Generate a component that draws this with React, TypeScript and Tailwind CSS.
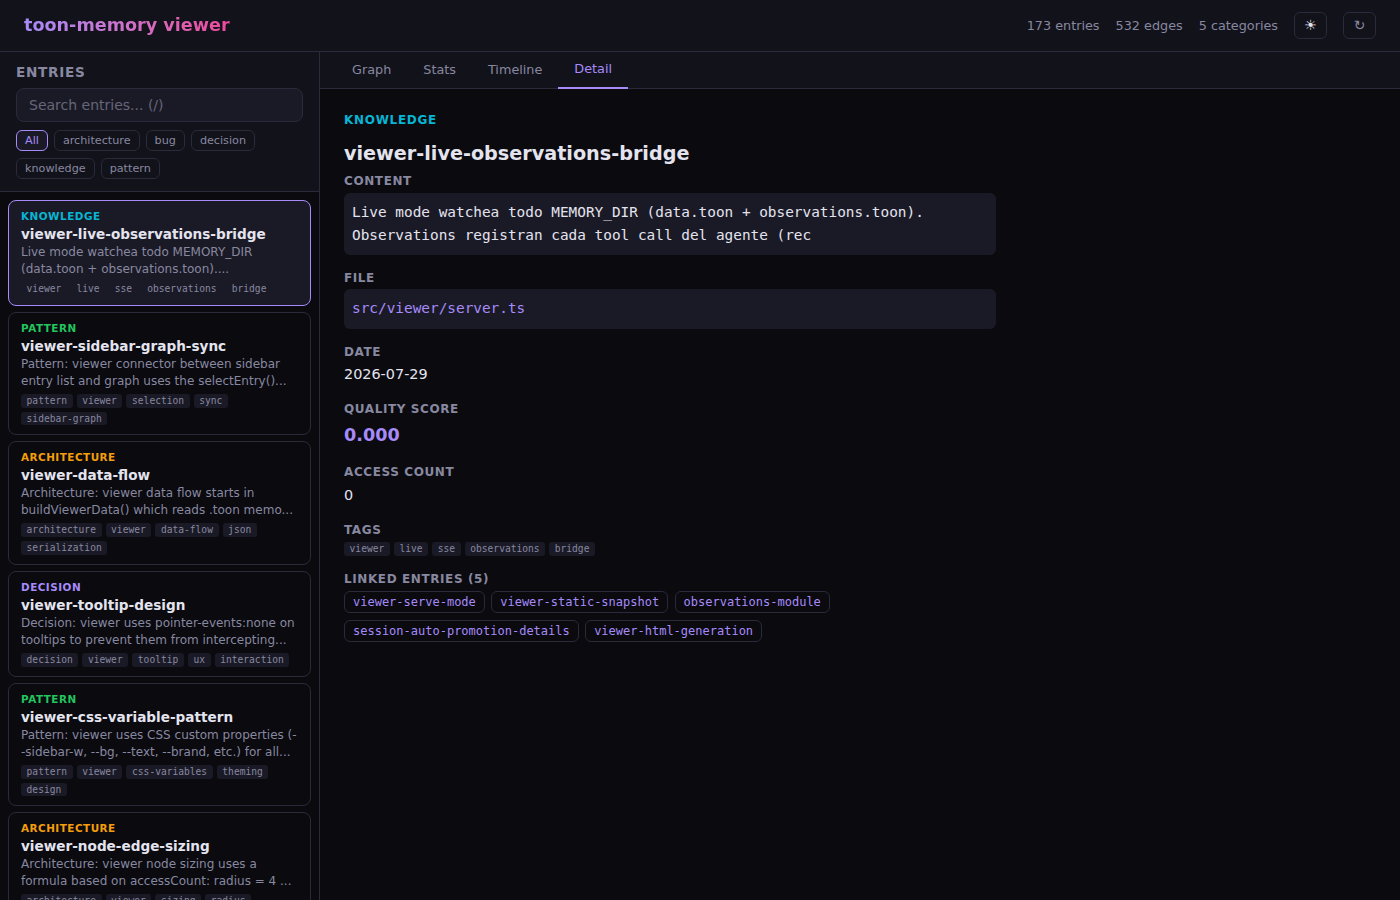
import { Fragment } from 'react';

const sans = "font-['DejaVu_Sans',sans-serif]";

const categoryColors: Record<string, string> = {
  knowledge: 'text-[#06b6d4]',
  pattern: 'text-[#22c55e]',
  architecture: 'text-[#f59e0b]',
  decision: 'text-[#a78bfa]',
};

const filters = ['All', 'architecture', 'bug', 'decision', 'knowledge', 'pattern'];

const entries = [
  {
    category: 'knowledge',
    title: 'viewer-live-observations-bridge',
    desc: ['Live mode watchea todo MEMORY_DIR', '(data.toon + observations.toon)....'],
    tags: ['viewer', 'live', 'sse', 'observations', 'bridge'],
    active: true,
  },
  {
    category: 'pattern',
    title: 'viewer-sidebar-graph-sync',
    desc: ['Pattern: viewer connector between sidebar', 'entry list and graph uses the selectEntry()...'],
    tags: ['pattern', 'viewer', 'selection', 'sync', 'sidebar-graph'],
  },
  {
    category: 'architecture',
    title: 'viewer-data-flow',
    desc: ['Architecture: viewer data flow starts in', 'buildViewerData() which reads .toon memo...'],
    tags: ['architecture', 'viewer', 'data-flow', 'json', 'serialization'],
  },
  {
    category: 'decision',
    title: 'viewer-tooltip-design',
    desc: ['Decision: viewer uses pointer-events:none on', 'tooltips to prevent them from intercepting...'],
    tags: ['decision', 'viewer', 'tooltip', 'ux', 'interaction'],
  },
  {
    category: 'pattern',
    title: 'viewer-css-variable-pattern',
    desc: ['Pattern: viewer uses CSS custom properties (-', '-sidebar-w, --bg, --text, --brand, etc.) for all...'],
    tags: ['pattern', 'viewer', 'css-variables', 'theming', 'design'],
  },
  {
    category: 'architecture',
    title: 'viewer-node-edge-sizing',
    desc: ['Architecture: viewer node sizing uses a', 'formula based on accessCount: radius = 4 ...'],
    tags: ['architecture', 'viewer', 'sizing', 'radius'],
  },
];

const links = [
  'viewer-serve-mode',
  'viewer-static-snapshot',
  'observations-module',
  'session-auto-promotion-details',
  'viewer-html-generation',
];

function Tag({ label }: { label: string }) {
  return (
    <span className="rounded-[3px] bg-[#1a1a26] px-[5.6px] font-['DejaVu_Sans_Mono',monospace] text-[9.6px] leading-[13.8px] text-[#8888a0]">
      {label}
    </span>
  );
}

function Label({ children }: { children: string }) {
  return <div className="text-[12px] leading-[15px] font-bold tracking-[0.6px] text-[#8888a0]">{children}</div>;
}

function EntryCard({ entry }: { entry: (typeof entries)[number] }) {
  return (
    <div
      className={
        entry.active
          ? 'mb-[6px] shrink-0 rounded-[8px] border border-[#a78bfa] bg-[#1a1a26] px-[12px] pt-[9px] pb-[9px]'
          : 'mb-[6px] shrink-0 rounded-[8px] border border-[#2a2a3a] px-[12px] pt-[9px] pb-[9px]'
      }
    >
      <div className={`text-[10.4px] leading-[13px] font-bold tracking-[0.5px] uppercase ${categoryColors[entry.category]}`}>
        {entry.category}
      </div>
      <div className="mt-[3px] text-[13.6px] leading-[17px] font-semibold text-[#e4e4ef]">{entry.title}</div>
      <div className="mt-[1px] text-[12px] leading-[17px] whitespace-nowrap text-[#8888a0]">
        {entry.desc.map((line) => (
          <Fragment key={line}>
            {line}
            <br />
          </Fragment>
        ))}
      </div>
      <div className="mt-[4px] flex flex-wrap gap-[4px]">
        {entry.tags.map((t) => (
          <Tag key={t} label={t} />
        ))}
      </div>
    </div>
  );
}

export default function App() {
  return (
    <div className={`flex h-[900px] w-[1400px] flex-col overflow-hidden bg-[#0a0a0f] text-[#e4e4ef] ${sans}`}>
      <header className="flex h-[52px] shrink-0 items-center justify-between border-b border-[#2a2a3a] bg-[#12121a] px-[24px]">
        <h1 className="bg-gradient-to-r from-[#a78bfa] to-[#ec4899] bg-clip-text text-[17.6px] font-bold text-transparent">
          toon-memory viewer
        </h1>
        <div className="flex items-center gap-[16px] text-[12.8px] text-[#8888a0]">
          <span>173 entries</span>
          <span>532 edges</span>
          <span>5 categories</span>
          <button className="h-[27px] w-[33px] rounded-[6px] border border-[#2a2a3a] text-[14px] text-[#e4e4ef]">☀</button>
          <button className="h-[27px] w-[33px] rounded-[6px] border border-[#2a2a3a] text-[14px]">↻</button>
        </div>
      </header>

      <div className="flex min-h-0 flex-1">
        <aside className="flex w-[320px] shrink-0 flex-col border-r border-[#2a2a3a]">
          <div className="h-[140px] shrink-0 border-b border-[#2a2a3a] bg-[#12121a] px-[16px] pt-[12px]">
            <div className="text-[13.6px] leading-[17px] font-bold tracking-[0.7px] text-[#8888a0]">ENTRIES</div>
            <div className="mt-[7px] flex h-[34px] items-center rounded-[8px] border border-[#2a2a3a] bg-[#1a1a26] px-[12px] text-[14px] text-[#666678]">
              Search entries... (/)
            </div>
            <div className="mt-[8px] flex flex-wrap gap-x-[6px] gap-y-[7px]">
              {filters.map((f) => (
                <span
                  key={f}
                  className={
                    f === 'All'
                      ? 'rounded-[6px] border border-[#a78bfa] bg-[#1a1a26] px-[8px] text-[11.2px] leading-[19px] text-[#a78bfa]'
                      : 'rounded-[6px] border border-[#2a2a3a] px-[8px] text-[11.2px] leading-[19px] text-[#8888a0]'
                  }
                >
                  {f}
                </span>
              ))}
            </div>
          </div>
          <div className="flex min-h-0 flex-1 flex-col overflow-hidden px-[8px] pt-[8px]">
            {entries.map((e) => (
              <EntryCard key={e.title} entry={e} />
            ))}
          </div>
        </aside>

        <main className="flex min-w-0 flex-1 flex-col">
          <nav className="flex h-[37px] shrink-0 border-b border-[#2a2a3a] bg-[#12121a] pl-[16px] text-[12.8px]">
            {['Graph', 'Stats', 'Timeline', 'Detail'].map((t) => (
              <div
                key={t}
                className={
                  t === 'Detail'
                    ? 'flex h-[37px] items-center border-b-2 border-[#a78bfa] px-[16px] pb-[1px] text-[#a78bfa]'
                    : 'flex h-[36px] items-center px-[16px] pb-[1px] text-[#8888a0]'
                }
              >
                {t}
              </div>
            ))}
          </nav>

          <section className="w-[700px] px-[24px] pt-[24px]">
            <div className="text-[12px] leading-[14px] font-bold tracking-[0.7px] text-[#06b6d4]">KNOWLEDGE</div>
            <h2 className="mt-[15px] text-[19.2px] leading-[24px] font-bold">viewer-live-observations-bridge</h2>

            <div className="mt-[8px]">
              <Label>CONTENT</Label>
              <div className="mt-[4px] h-[62px] rounded-[6px] bg-[#1a1a26] px-[8px] pt-[8px] font-['DejaVu_Sans_Mono',monospace] text-[14.4px] leading-[23px] whitespace-nowrap">
                Live mode watchea todo MEMORY_DIR (data.toon + observations.toon).
                <br />
                Observations registran cada tool call del agente (rec
              </div>
            </div>

            <div className="mt-[16px]">
              <Label>FILE</Label>
              <div className="mt-[3px] flex h-[40px] items-center rounded-[6px] bg-[#1a1a26] px-[8px] font-['DejaVu_Sans_Mono',monospace] text-[14.4px] text-[#a78bfa]">
                src/viewer/server.ts
              </div>
            </div>

            <div className="mt-[16px]">
              <Label>DATE</Label>
              <div className="mt-[4px] text-[14.4px] leading-[20px]">2026-07-29</div>
            </div>

            <div className="mt-[18px]">
              <Label>QUALITY SCORE</Label>
              <div className="mt-[6px] text-[17.6px] leading-[24px] font-bold text-[#a78bfa]">0.000</div>
            </div>

            <div className="mt-[18px]">
              <Label>ACCESS COUNT</Label>
              <div className="mt-[5px] text-[14.4px] leading-[20px]">0</div>
            </div>

            <div className="mt-[18px]">
              <Label>TAGS</Label>
              <div className="mt-[4px] flex flex-wrap gap-[4px]">
                {entries[0].tags.map((t) => (
                  <Tag key={t} label={t} />
                ))}
              </div>
            </div>

            <div className="mt-[16px]">
              <Label>LINKED ENTRIES (5)</Label>
              <div className="mt-[4px] flex w-[652px] flex-wrap gap-x-[6.4px] gap-y-[7px]">
                {links.map((l) => (
                  <span
                    key={l}
                    className="rounded-[6px] border border-[#2a2a3a] px-[8px] font-['DejaVu_Sans_Mono',monospace] text-[12px] leading-[20px] text-[#a78bfa]"
                  >
                    {l}
                  </span>
                ))}
              </div>
            </div>
          </section>
        </main>
      </div>
    </div>
  );
}
